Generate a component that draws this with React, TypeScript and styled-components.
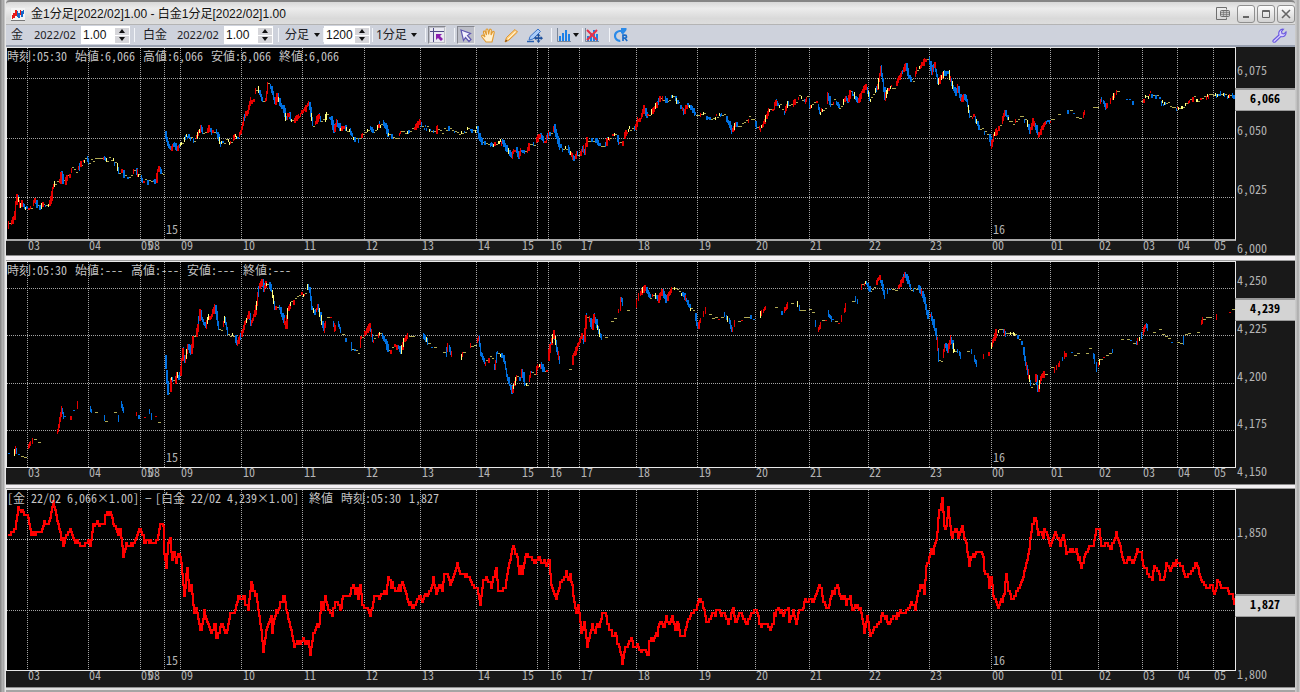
import React from "react";
import styled, { createGlobalStyle } from "styled-components";

const GlobalStyle = createGlobalStyle`
  * { box-sizing: border-box; }
  body { margin: 0; background: #c9c9c9; }
`;

const uiFont = `"Liberation Sans", "Noto Sans CJK JP", sans-serif`;
const labelFont = `"Noto Sans", "Noto Sans CJK JP", sans-serif`;
const monoFont = `"Noto Sans Mono CJK JP", "Liberation Mono", "Noto Sans CJK JP", monospace`;

/* ---------- window chrome ---------- */

const Window = styled.main`
  display: flex;
  flex-direction: column;
  min-height: 100vh;
  padding: 0 5px 0 6px;
  background: linear-gradient(90deg, #8a8a8a 0, #8a8a8a 1px, #b4b4b4 2px, #a2a2a2 4px, #e6e6e6 5px, #e6e6e6 6px, #c9c9c9 7px, #c9c9c9 calc(100% - 4px), #a8a8a8 calc(100% - 2px), #d6d6d6 100%);
`;

const TitleBar = styled.header`
  display: flex;
  align-items: center;
  height: 25px;
  padding: 2px 0 0 5px;
  border-top: 2px solid #858585;
  border-bottom: 1px solid #b4b4b4;
  border-radius: 4px 4px 0 0;
  background: linear-gradient(#d8d8d8, #ececec 30%, #d9d9d9 75%, #dddddd);
`;

const Title = styled.h1`
  flex: 1;
  margin: 0 0 0 6px;
  font: 400 12px/18px ${uiFont};
  color: #111;
  white-space: nowrap;
`;

const WindowButtons = styled.div`
  display: flex;
  align-items: center;
  gap: 2px;
`;

const WindowButton = styled.button<{ $flat?: boolean }>`
  display: grid;
  place-items: center;
  width: 18px;
  height: 18px;
  padding: 0;
  margin-right: ${(p) => (p.$flat ? "3px" : "0")};
  border: ${(p) => (p.$flat ? "0" : "1px solid #8f8f8f")};
  border-radius: 3px;
  background: ${(p) => (p.$flat ? "transparent" : "linear-gradient(#fdfdfd, #d2d2d2)")};
`;

/* ---------- toolbar ---------- */

const Toolbar = styled.div`
  display: flex;
  align-items: center;
  height: 22px;
  padding: 0 7px 0 5px;
  background: #ced2dc;
  border-bottom: 2px solid #98a0b0;
`;

const Commodity = styled.span<{ $wide?: boolean }>`
  width: ${(p) => (p.$wide ? "34px" : "23px")};
  font: 12px/18px ${labelFont};
  color: #1c1c24;
`;

const Contract = styled.span`
  width: 47px;
  font: 11px/18px ${labelFont};
  color: #1c1c24;
`;

const Spinner = styled.label<{ $narrow?: boolean }>`
  display: flex;
  align-items: center;
  width: ${(p) => (p.$narrow ? "46px" : "49px")};
  height: 18px;
  padding-right: 1px;
  background: #fff;
`;

const SpinnerInput = styled.input`
  flex: 1;
  min-width: 0;
  height: 16px;
  padding: 0 0 0 2px;
  border: 0;
  background: transparent;
  font: 12px/16px ${uiFont};
  color: #111;
`;

const Arrows = styled.span`
  display: flex;
  flex-direction: column;
  gap: 1px;
`;

const ArrowButton = styled.button`
  display: grid;
  place-items: center;
  width: 14px;
  height: 7px;
  padding: 0;
  border: 0;
  background: #d6d6da;
`;

const Separator = styled.span<{ $before: number; $after: number }>`
  width: 1px;
  height: 14px;
  margin: 0 ${(p) => p.$after}px 0 ${(p) => p.$before}px;
  background: #f2f4f8;
`;

const Picker = styled.label<{ $width: number }>`
  display: flex;
  align-items: center;
  justify-content: space-between;
  width: ${(p) => p.$width}px;
`;

const Select = styled.select`
  appearance: none;
  flex: 1;
  min-width: 0;
  padding: 0;
  border: 0;
  background: transparent;
  font: 12px/18px ${labelFont};
  color: #1c1c24;
`;

const Tool = styled.button<{ $pressed?: boolean; $gap?: number }>`
  display: grid;
  place-items: center;
  width: 18px;
  height: 18px;
  padding: 0;
  margin-right: ${(p) => p.$gap ?? 0}px;
  border: 1px solid ${(p) => (p.$pressed ? "#85878f" : "transparent")};
  border-right-color: ${(p) => (p.$pressed ? "#e8e8e8" : "transparent")};
  border-bottom-color: ${(p) => (p.$pressed ? "#e8e8e8" : "transparent")};
  background: ${(p) => (p.$pressed ? "#bcbec8" : "transparent")};
`;

const Spacer = styled.span`
  flex: 1;
`;

/* ---------- chart panes ---------- */

const Pane = styled.section<{ $height: number }>`
  display: grid;
  grid-template-columns: minmax(0, 1fr) 59px;
  flex: ${(p) => p.$height} 0 ${(p) => p.$height}px;
  background: #191919;
`;

const PlotColumn = styled.div`
  display: flex;
  flex-direction: column;
`;

const Plot = styled.div<{ $heavy?: boolean }>`
  position: relative;
  flex: 1;
  border: 1px solid #e8e8e8;
  border-bottom: ${(p) => (p.$heavy ? "2px solid #a8a8a8" : "1px solid #e8e8e8")};
  background: #000;
`;

const Canvas = styled.svg`
  position: absolute;
  inset: 0;
  width: 100%;
  height: 100%;
  overflow: visible;
`;

const AxisText = styled.text`
  font: 12px ${monoFont};
  fill: #b4b4b4;
`;

const HourAxis = styled.svg<{ $height: number }>`
  position: relative;
  display: block;
  width: 100%;
  height: ${(p) => p.$height}px;
  overflow: visible;
`;

const Readout = styled.div<{ $columns: string }>`
  position: absolute;
  top: 0;
  left: 0;
  display: grid;
  grid-template-columns: ${(p) => p.$columns};
  font: 12px/16px ${monoFont};
  color: #c4c4c4;
  white-space: pre;
`;

const ScaleColumn = styled.div`
  position: relative;
`;

const Tag = styled.output`
  position: absolute;
  left: -1px;
  right: 0;
  height: 23px;
  border-top: 2px solid #9a9a9a;
  border-bottom: 1px solid #9a9a9a;
  background: #d3d3d3;
  font: 700 12px/16px ${monoFont};
  color: #000;
  text-align: center;
`;

const Divider = styled.div<{ $height: number }>`
  height: ${(p) => p.$height}px;
  border-top: 1px solid #8c8c8c;
  border-bottom: 1px solid #9c9c9c;
  background: #f3f0f3;
`;

const BottomFrame = styled.div`
  height: 5px;
  border-top: 1px solid #909090;
  border-bottom: 2px solid #a4a4a4;
  background: #e0e0e0;
`;

/* ---------- data ---------- */

const LEFT = 7;
const SPAN = 1228;

const hourLines = [
  27, 88, 140, 164, 180, 241, 302, 364, 420, 476, 537, 548, 579, 636, 697, 755,
  809, 868, 929, 991, 1050, 1098, 1142, 1177, 1213,
];

const hourLabels: [number, string][] = [
  [28, "03"], [89, "04"], [141, "05"], [148, "08"], [181, "09"], [243, "10"],
  [304, "11"], [366, "12"], [422, "13"], [478, "14"], [522, "15"], [550, "16"],
  [581, "17"], [638, "18"], [699, "19"], [756, "20"], [810, "21"], [869, "22"],
  [930, "23"], [992, "00"], [1051, "01"], [1099, "02"], [1143, "03"],
  [1178, "04"], [1214, "05"],
];

const goldPoints = `8,227 9,222 11,223 13,220 15,214 16,202 17,196 19,201 20,206 22,203 25,207 27,209 30,208 32,206 35,199 37,205 40,208 43,204 46,207 49,204 51,198 53,188 55,182 58,179 60,182 61,173 63,181 65,183 67,176 70,173 72,169 75,170 79,168 81,163 84,160 87,158 89,162 92,161 95,158 98,160 101,158 104,157 107,161 110,158 114,162 117,165 119,172 122,170 124,175 128,177 131,174 135,169 138,174 141,177 143,182 146,179 150,180 154,181 156,181 158,170 159,168 161,173 164,171 165,133 167,140 169,146 171,149 174,144 177,149 180,145 183,142 186,137 188,137 192,138 195,140 198,134 201,128 203,131 206,132 209,128 212,132 216,130 218,136 220,142 223,142 226,140 229,143 232,140 235,136 238,136 241,132 243,124 245,115 248,111 251,100 254,97 256,89 258,88 261,96 263,101 266,100 268,84 270,85 273,93 275,103 277,95 280,103 284,110 286,119 289,114 291,119 294,121 297,117 300,115 304,110 307,106 309,103 311,115 313,124 316,121 319,115 321,120 324,121 327,115 331,119 334,130 337,122 340,128 344,126 347,130 350,131 353,136 356,138 360,138 363,134 367,130 370,127 373,132 376,130 380,124 383,122 386,127 388,135 392,136 396,137 400,133 405,132 410,132 414,129 417,125 420,121 422,126 425,127 429,129 433,131 435,133 438,127 442,131 447,128 450,129 455,132 459,134 462,131 465,131 469,128 474,130 477,127 479,136 482,142 487,143 490,143 494,145 499,142 502,141 506,148 509,152 512,156 514,150 516,149 519,156 521,150 525,151 527,152 529,145 532,142 535,144 537,139 540,135 544,141 546,140 549,133 552,134 554,127 557,138 560,147 564,149 568,148 571,154 574,159 577,154 580,154 583,148 585,153 587,138 592,138 596,138 599,144 604,147 608,139 612,136 616,133 619,143 623,140 626,131 629,128 633,130 636,126 638,119 641,117 644,108 647,116 651,113 655,107 658,103 660,98 664,97 667,101 671,96 675,98 678,103 682,108 684,112 687,106 691,107 695,113 699,117 703,112 708,117 714,117 720,115 725,116 729,123 732,131 736,124 741,125 746,121 750,117 754,120 757,127 760,126 763,125 766,117 769,111 773,110 776,101 779,105 785,111 788,103 792,106 796,100 799,97 805,98 808,96 810,105 814,104 817,102 820,112 823,110 826,108 828,95 831,105 835,100 839,107 843,103 846,97 848,101 850,92 854,95 858,102 862,92 866,86 870,98 874,93 878,86 881,68 883,80 885,98 888,89 892,87 896,85 900,76 903,71 906,64 908,74 911,80 914,79 917,69 921,66 925,60 929,59 932,72 935,64 938,82 941,78 945,72 949,73 952,84 956,94 958,87 961,100 964,96 967,100 970,117 974,116 978,124 982,129 986,134 989,136 992,146 994,135 997,129 1001,124 1005,112 1008,118 1012,122 1018,118 1023,118 1027,122 1030,132 1033,120 1036,128 1039,136 1042,128 1046,122 1050,122 1055,117 1062,114 1067,110 1074,112 1079,118 1082,118 1087,107 1092,104 1097,108 1102,99 1106,107 1112,99 1117,92 1122,95 1127,101 1133,101 1140,101 1145,96 1151,94 1156,96 1163,102 1170,105 1177,109 1183,106 1190,101 1195,96 1199,101 1205,96 1210,94 1216,94 1224,94 1228,96 1232,94 1234,98`;

const platinumPoints = `8,455 12,457 16,449 18,455 22,456 26,456 28,447 31,443 34,438 36,436 38,443 42,446 44,451 48,451 51,450 53,436 56,434 58,431 60,420 62,409 64,417 68,418 71,415 73,408 76,408 79,402 83,398 86,400 92,412 98,411 102,412 105,419 110,415 115,412 119,419 121,403 124,411 130,410 134,409 138,417 141,419 147,417 148,407 152,418 157,414 158,422 162,422 164,418 165,352 166,372 168,393 170,392 171,378 175,382 177,374 179,378 181,369 183,350 185,362 188,346 191,352 193,338 196,335 198,325 200,312 203,321 206,326 209,315 212,314 215,306 217,318 219,328 222,329 225,318 228,333 231,336 234,333 237,344 240,337 242,333 245,324 249,314 251,324 254,316 257,303 259,287 262,281 264,290 266,283 269,284 272,291 275,308 279,306 282,315 286,326 288,309 291,303 295,298 300,295 306,293 308,285 310,291 312,307 315,313 318,306 321,318 324,330 327,318 331,316 335,329 338,322 342,334 346,339 349,336 352,348 356,352 359,352 361,338 364,335 367,330 370,325 373,340 377,335 381,334 385,340 388,350 393,347 397,345 401,351 404,341 409,334 415,333 421,332 428,342 432,346 437,345 443,352 446,354 448,345 452,355 456,359 460,361 463,353 468,350 471,345 476,343 479,337 481,353 485,362 489,357 493,361 495,369 497,354 502,355 505,362 507,376 510,385 512,391 514,385 517,377 520,380 522,371 525,383 528,383 531,373 535,374 538,366 541,364 544,371 547,370 549,350 552,340 554,332 557,349 560,362 564,365 567,368 571,370 573,357 576,350 579,343 582,335 584,342 586,315 589,317 592,328 594,315 596,322 599,332 602,338 606,338 608,322 612,320 616,315 620,309 621,298 624,306 628,310 632,305 636,305 638,298 642,291 645,287 650,297 654,293 658,300 662,291 666,300 672,289 678,289 683,294 687,301 690,307 694,311 698,327 702,317 706,310 712,317 718,319 724,314 730,322 732,331 735,322 740,319 746,315 750,316 756,321 761,314 766,307 772,308 778,309 784,311 788,305 795,298 800,309 808,309 813,315 818,331 822,322 826,318 828,313 832,320 838,323 841,320 846,306 850,302 855,298 858,302 862,285 866,282 870,290 875,285 880,277 883,289 885,296 889,289 897,290 901,283 905,274 908,281 911,288 915,290 918,287 922,293 925,302 928,317 931,315 934,325 937,338 939,360 942,362 945,345 948,350 951,338 954,350 958,350 961,356 966,350 970,348 974,357 977,365 981,360 985,354 989,350 992,345 996,332 1002,329 1006,335 1012,332 1018,338 1022,343 1025,359 1028,372 1031,385 1034,382 1036,376 1038,390 1041,378 1045,372 1050,366 1054,371 1060,363 1065,354 1070,353 1080,353 1090,350 1094,357 1097,369 1100,360 1106,353 1112,352 1118,341 1124,336 1130,340 1136,344 1142,335 1146,325 1150,331 1158,328 1164,335 1172,343 1178,342 1183,343 1185,334 1192,334 1198,330 1203,319 1208,316 1214,312 1217,318 1222,317 1228,312 1233,309`;

const spreadPoints = `8,534 12,533 15,528 18,507 21,512 25,515 28,517 31,535 34,536 37,532 40,533 44,523 49,522 53,501 57,520 60,533 63,545 66,536 70,530 74,540 78,544 83,546 88,541 90,545 93,527 97,520 99,526 104,522 107,513 110,511 113,523 118,533 120,528 123,556 126,546 133,545 136,537 140,528 144,540 149,542 153,546 157,540 160,523 163,525 164,553 166,567 168,543 170,537 172,558 174,552 176,563 178,553 181,563 184,595 187,568 189,592 191,585 194,614 196,607 200,632 202,627 204,612 207,622 211,632 215,625 216,637 220,627 222,624 226,635 230,613 235,613 238,596 241,600 244,596 245,604 248,607 251,583 254,592 256,594 259,618 261,631 263,652 266,630 268,623 271,616 272,632 275,615 280,605 284,597 288,620 291,630 294,648 297,640 300,644 303,639 305,644 308,640 310,652 313,637 317,625 319,623 321,603 323,612 325,597 328,610 332,614 336,602 340,611 343,595 349,597 353,585 355,595 357,588 358,599 360,583 362,605 366,608 370,615 374,597 379,598 384,592 386,593 388,577 391,584 394,591 399,589 402,583 405,591 408,603 413,607 416,602 420,595 422,601 425,595 428,594 431,588 433,580 436,593 439,586 442,590 444,574 447,573 450,584 454,575 457,565 460,573 465,574 469,578 473,587 477,589 480,604 483,581 486,577 491,587 496,568 498,590 505,589 508,567 511,555 513,545 517,558 519,575 521,562 522,573 526,554 531,559 535,563 538,558 541,563 546,564 549,560 551,584 554,594 556,598 560,583 563,579 566,572 568,582 570,574 574,603 576,613 578,605 581,632 584,624 587,646 592,627 595,633 597,625 599,627 602,613 605,612 608,627 612,635 615,634 619,647 622,661 625,650 631,638 633,646 638,646 641,651 645,649 648,658 649,642 653,640 657,632 660,621 664,628 666,615 669,623 672,616 675,628 678,623 680,635 684,635 687,622 691,613 696,611 699,596 703,607 706,621 709,620 712,613 718,611 724,614 728,623 733,608 735,622 740,613 747,624 750,615 755,611 758,618 761,628 764,623 771,628 774,617 778,608 783,613 788,608 789,621 793,611 796,624 798,612 802,610 804,601 808,604 810,597 813,603 817,589 821,588 823,603 828,609 832,592 837,586 840,596 844,597 846,604 850,596 852,611 855,605 861,613 864,632 867,616 870,635 874,628 879,624 882,614 886,619 889,623 893,617 899,613 905,613 911,603 915,609 918,592 922,585 924,592 926,566 929,560 931,548 933,551 936,540 939,512 942,498 944,527 946,527 948,507 951,536 956,528 958,538 962,527 966,544 969,563 972,555 977,552 982,553 984,568 988,577 989,586 991,577 993,595 998,607 1001,601 1003,600 1006,575 1008,589 1012,600 1016,592 1021,583 1023,577 1026,563 1029,549 1031,529 1034,519 1036,520 1038,533 1041,530 1043,537 1044,530 1047,535 1050,545 1055,532 1057,537 1060,543 1063,536 1066,553 1071,549 1077,553 1081,567 1085,553 1090,545 1093,547 1096,529 1099,529 1101,545 1107,544 1111,547 1116,534 1120,545 1122,558 1126,563 1128,557 1133,563 1137,551 1141,552 1142,563 1147,573 1152,579 1154,566 1160,579 1164,578 1166,563 1170,569 1173,563 1179,564 1182,566 1185,579 1189,573 1193,569 1196,563 1199,573 1204,586 1208,588 1212,586 1214,595 1217,582 1223,589 1226,587 1229,593 1232,594 1234,604`;

type Point = [number, number];

const parse = (s: string): Point[] =>
  s.split(" ").map((p) => p.split(",").map(Number) as Point);

/* Price at every minute column, interpolated between the turning points. */
function columns(points: Point[]): Point[] {
  const out: Point[] = [];
  for (let i = 0; i < points.length - 1; i++) {
    const [x0, y0] = points[i];
    const [x1, y1] = points[i + 1];
    for (let x = x0; x < x1; x++) out.push([x, y0 + ((y1 - y0) * (x - x0)) / (x1 - x0)]);
  }
  out.push(points[points.length - 1]);
  return out;
}

function random(seed: number) {
  let s = seed;
  return () => {
    s = (s + 0x6d2b79f5) | 0;
    let t = Math.imul(s ^ (s >>> 15), 1 | s);
    t = (t + Math.imul(t ^ (t >>> 7), 61 | t)) ^ t;
    return ((t ^ (t >>> 14)) >>> 0) / 4294967296;
  };
}

/* Quiet minutes become one-pixel dashes, moving ones become coloured bars. */
function candles(points: Point[], tick: number, thin: [number, number][], seed: number) {
  const rnd = random(seed);
  const paths = { up: "", down: "", flat: "", bright: "" };
  const cols = columns(points);
  const put = (kind: keyof typeof paths, x: number, y: number, w: number, h: number) => {
    paths[kind] += `M${x} ${y}h${w}v${h}h-${w}z`;
  };
  let i = 0;
  while (i < cols.length - 1) {
    const [x, y] = cols[i];
    const slope = cols[i + 1][1] - y;
    const sparse = thin.some(([a, b]) => x >= a && x < b);
    const jitter = Math.round((rnd() - 0.5) * 2) * tick;
    const level = Math.round(Math.round(y / tick) * tick + jitter * 0.6);
    const trend = slope < 0 ? "up" : "down";
    const kind = rnd();
    if (Math.abs(slope) > 24) {
      i += 1;
    } else if (Math.abs(slope) < 1.3) {
      if (sparse) {
        if (rnd() < 0.6) put(kind < 0.75 ? "flat" : trend, x, level, kind < 0.75 ? 3 : 2, kind < 0.9 ? 1 : 4);
        i += 3;
      } else if (kind < 0.5) {
        put("flat", x, level, 2, 1);
        i += 2;
      } else if (kind < 0.65) {
        put("bright", x, level - 1, 1, 3);
        i += 1;
      } else {
        put(trend, x, level - 1, kind > 0.85 ? 2 : 1, 2 + Math.floor(rnd() * 4));
        i += kind > 0.85 ? 2 : 1;
      }
    } else {
      if (!sparse || rnd() < 0.65) {
        const tall = Math.round(Math.min(14, Math.abs(slope) + 2 + rnd() * 4));
        const top = Math.round(y + slope / 2 - tall / 2);
        const hue = kind > 0.9 ? "bright" : kind > 0.82 ? (trend === "up" ? "down" : "up") : trend;
        put(hue, x, top, kind < 0.4 && !sparse ? 2 : 1, tall);
      }
      i += 1;
    }
  }
  return paths;
}

function steps(points: Point[], tick: number) {
  const rnd = random(11);
  let d = "";
  columns(points).forEach(([x, y], i) => {
    const jitter = rnd() < 0.35 ? (rnd() - 0.5) * 6 : 0;
    const level = Math.round(Math.round((y + jitter) / tick) * tick);
    d += i === 0 ? `M${x} ${level}` : `H${x}V${level}`;
  });
  return d;
}

const gold = candles(parse(goldPoints), 2.4, [[1054, 1140]], 5);
const platinum = candles(
  parse(platinumPoints),
  1.9,
  [[8, 164], [326, 350], [405, 480], [555, 572], [600, 640], [700, 862], [885, 900], [958, 990], [1044, 1234]],
  9,
);
const spread = steps(parse(spreadPoints), 2.8);

interface PaneSpec {
  name: string;
  top: number;
  height: number;
  plotHeight: number;
  axisHeight: number;
  heavy?: boolean;
  grid: number[];
  scale: [number, string][];
  tag: [number, string];
  readout: string[];
  columns: string;
}

const panes: PaneSpec[] = [
  {
    name: "金", top: 47, height: 208, plotHeight: 191, axisHeight: 14, heavy: true,
    grid: [78, 138, 197],
    scale: [[75, "6,075"], [135, "6,050"], [194, "6,025"], [253, "6,000"]],
    tag: [88, "6,066"],
    readout: ["時刻:05:30", "始値:6,066", "高値:6,066", "安値:6,066", "終値:6,066"],
    columns: "repeat(5, 68px)",
  },
  {
    name: "白金", top: 261, height: 223, plotHeight: 205, axisHeight: 16,
    grid: [288, 335, 383, 430],
    scale: [[285, "4,250"], [333, "4,225"], [381, "4,200"], [428, "4,175"], [476, "4,150"]],
    tag: [298, "4,239"],
    readout: ["時刻:05:30", "始値:---", "高値:---", "安値:---", "終値:---"],
    columns: "68px repeat(4, 56px)",
  },
  {
    name: "価格差", top: 489, height: 198, plotHeight: 180, axisHeight: 16,
    grid: [539, 610],
    scale: [[537, "1,850"], [679, "1,800"]],
    tag: [594, "1,827"],
    readout: ["[金 22/02 6,066×1.00]", "−", "[白金 22/02 4,239×1.00]", "終値", "時刻:05:30", "1,827"],
    columns: "138px 10px 154px 32px 68px 40px",
  },
];

const percent = (value: number, size: number) => `${(value / size) * 100}%`;

function Candles({ data }: { data: typeof gold }) {
  return (
    <>
      <path d={data.flat} fill="#b0aa54" />
      <path d={data.down} fill="#0070e0" />
      <path d={data.up} fill="#e60000" />
      <path d={data.bright} fill="#ffff80" />
    </>
  );
}

function ChartPane({ spec, children }: { spec: PaneSpec; children: React.ReactNode }) {
  const top = spec.top + 1;
  const verticals = hourLines.map((x) => `M${x + 0.5} ${top}v${spec.plotHeight}`).join("");
  const horizontals = spec.grid.map((y) => `M${LEFT} ${y + 0.5}h${SPAN}`).join("");
  return (
    <Pane $height={spec.height} aria-label={spec.name}>
      <PlotColumn>
        <Plot $heavy={spec.heavy}>
          <Canvas>
            <svg
              width="100%"
              height="100%"
              viewBox={`${LEFT} ${top} ${SPAN} ${spec.plotHeight}`}
              preserveAspectRatio="none"
              shapeRendering="crispEdges"
            >
              <path d={verticals + horizontals} stroke="#a4a4a4" strokeDasharray="1 1" fill="none" />
              {children}
            </svg>
            <AxisText x={percent(166 - LEFT, SPAN)} y="100%" dy="-5">15</AxisText>
            <AxisText x={percent(993 - LEFT, SPAN)} y="100%" dy="-5">16</AxisText>
          </Canvas>
          <Readout $columns={spec.columns}>
            {spec.readout.map((t) => <span key={t}>{t}</span>)}
          </Readout>
        </Plot>
        <HourAxis $height={spec.axisHeight}>
          {hourLabels.map(([x, t]) => (
            <AxisText key={x} x={percent(x - LEFT + 1, SPAN + 2)} y="9">{t}</AxisText>
          ))}
        </HourAxis>
      </PlotColumn>
      <ScaleColumn>
        <Canvas>
          {spec.scale.map(([y, t]) => (
            <AxisText key={t} x="1" y={percent(y - spec.top, spec.height)}>{t}</AxisText>
          ))}
        </Canvas>
        <Tag style={{ top: percent(spec.tag[0] - spec.top, spec.height) }}>{spec.tag[1]}</Tag>
      </ScaleColumn>
    </Pane>
  );
}

/* ---------- icons ---------- */

const AppIcon = () => (
  <svg width="14" height="13" viewBox="0 0 14 13" shapeRendering="crispEdges" aria-hidden="true">
    <path d="M0 0h14v13H0z" fill="#f4f4f4" />
    <path d="M0 12h14v1H0z" fill="#777" />
    <path d="M1 7h1v4H1zM2 5h2v5H2zM4 2h2v6H4zM9 2h1v5H9z" fill="#e81818" />
    <path d="M6 3h1v6H6zM7 5h2v5H7zM10 3h2v6h-2zM12 2h1v4h-1z" fill="#1868c8" />
  </svg>
);

const Triangle = ({ up }: { up?: boolean }) => (
  <svg width="6" height="4" viewBox="0 0 6 4" aria-hidden="true">
    <path d={up ? "M0 4h6L3 0z" : "M0 0h6L3 4z"} fill="#111" />
  </svg>
);

const PopOutIcon = () => (
  <svg width="15" height="14" viewBox="0 0 15 14" fill="none" stroke="#6e6e6e" aria-hidden="true">
    <path d="M10.500 2.500V.5H.5v12h10v-2" />
    <rect x="4.500" y="3.500" width="9" height="6" rx="1" fill="#c4c4c4" />
    <path d="M5 5.500h8M5 7.500h8M7.500 4v5M10.500 4v5" strokeOpacity=".6" />
  </svg>
);
const MinIcon = () => (
  <svg width="12" height="12" viewBox="0 0 12 12" aria-hidden="true"><path d="M3 8h6v2H3z" fill="#666" /></svg>
);
const MaxIcon = () => (
  <svg width="12" height="12" viewBox="0 0 12 12" aria-hidden="true">
    <path d="M2.500 2.500h7v7h-7zM2 3.500h8" fill="none" stroke="#666" />
  </svg>
);
const CloseIcon = () => (
  <svg width="12" height="12" viewBox="0 0 12 12" aria-hidden="true">
    <path d="M2 2l8 8M10 2l-8 8" stroke="#666" strokeWidth="1.600" />
  </svg>
);

const CrossCursorIcon = () => (
  <svg width="14" height="14" viewBox="0 0 14 14" aria-hidden="true">
    <path d="M0 0h14v14H0z" fill="#e9e9f1" />
    <path d="M3.500 0v14M0 3.500h14" stroke="#504c88" />
    <path d="M6 6h6l-2 2 3 3-2 2-3-3-2 2z" fill="#8a1fae" />
  </svg>
);
const PointerIcon = () => (
  <svg width="14" height="15" viewBox="0 0 14 15" aria-hidden="true">
    <path d="M2 2l9.500 3.500-3 2 3.500 4-2 2-3.500-4-2 3z" fill="#f4f2ff" stroke="#6058b0" strokeWidth="1.200" />
  </svg>
);
const HandIcon = () => (
  <svg width="15" height="15" viewBox="0 0 15 15" aria-hidden="true">
    <path
      d="M5 14L1 9c-1-1.500.5-2.500 1.500-1.500L4 9 2.500 4.500c-.3-1.500 1.200-2 1.700-.7L5.500 7 5 2.200C5 .7 6.700.7 7 2l.6 4.500L8.500 2c.3-1.300 2-1 1.800.4L10 7l1.500-3c.6-1.200 2-.6 1.700.6L12 10l-1 4z"
      fill="#fff0d0" stroke="#e09a30" strokeWidth="1.100"
    />
  </svg>
);
const PencilIcon = () => (
  <svg width="15" height="15" viewBox="0 0 15 15" aria-hidden="true">
    <path d="M1 14l1.500-4.500 8.500-8 2.500 2.500L5 12z" fill="#ffd488" stroke="#e0922a" />
    <path d="M1 14l1-2.500 1.500 1.500z" fill="#7a4a18" />
    <path d="M4 11l7.500-7.500" stroke="#fff3d8" />
  </svg>
);
const PenMoveIcon = () => (
  <svg width="16" height="15" viewBox="0 0 16 15" aria-hidden="true">
    <path d="M2 12l1-3.500L11 1l2.500 2.500L6 11z" fill="#a9cbf8" stroke="#3a74c8" />
    <path d="M0 13.500h7" stroke="#2860b0" strokeWidth="1.500" />
    <path d="M11.500 5.500l2 2.300h-1.300v1.500h1.500V8L16 10.200l-2.300 2.100v-1.200h-1.500v1.500h1.300l-2 2.300-2-2.300h1.300v-1.500H9.300v1.200L7 10.200 9.300 8v1.300h1.500V7.800H9.500z" fill="#1c4f9c" />
  </svg>
);
const BarsIcon = ({ crossed }: { crossed?: boolean }) => (
  <svg width="14" height="14" viewBox="0 0 14 14" aria-hidden="true">
    <path d="M.5 0v13.500H14" stroke="#7b8798" fill="none" />
    <path d="M2 8h2v5H2zM5 5h2v8H5zM8 2h2v11H8zM11 6h2v7h-2z" fill="#1a80e8" />
    {crossed && <path d="M2 2l10 10M12 2L2 12" stroke="#e83048" strokeWidth="2" />}
  </svg>
);
const ReloadIcon = () => (
  <svg width="15" height="15" viewBox="0 0 15 15" aria-hidden="true">
    <path d="M8 3H5.500a4.800 4.800 0 1 0 .8 9.800" fill="none" stroke="#2a8ae8" strokeWidth="2.200" />
    <path d="M7 0h5.500v2L9 6.500 7 5z" fill="#2a8ae8" />
    <path d="M9 13V7.200h2a1.500 1.500 0 0 1 0 3H9m2 0l2.200 2.800" fill="none" stroke="#1a6cc8" strokeWidth="1.700" />
  </svg>
);
const WrenchIcon = () => (
  <svg width="15" height="15" viewBox="0 0 15 15" aria-hidden="true">
    <path
      d="M1 12.500L7 7C6 4 8 .8 11.500 1.200L9.500 3.500l.5 2 2 .4 2-2C14.500 7 12 9.500 8.800 8.500L3.200 14c-1.200.8-3-.4-2.200-1.500z"
      fill="#d8d0ff" stroke="#6a58e0" strokeWidth="1.100"
    />
  </svg>
);

function NumberBox({ label, value, narrow }: { label: string; value: string; narrow?: boolean }) {
  return (
    <Spinner $narrow={narrow}>
      <SpinnerInput aria-label={label} defaultValue={value} />
      <Arrows>
        <ArrowButton aria-label={`${label} +`}><Triangle up /></ArrowButton>
        <ArrowButton aria-label={`${label} −`}><Triangle /></ArrowButton>
      </Arrows>
    </Spinner>
  );
}

export default function App() {
  return (
    <Window>
      <GlobalStyle />
      <TitleBar>
        <AppIcon />
        <Title>金1分足[2022/02]1.00 - 白金1分足[2022/02]1.00</Title>
        <WindowButtons>
          <WindowButton $flat aria-label="別ウィンドウ"><PopOutIcon /></WindowButton>
          <WindowButton aria-label="最小化"><MinIcon /></WindowButton>
          <WindowButton aria-label="最大化"><MaxIcon /></WindowButton>
          <WindowButton aria-label="閉じる"><CloseIcon /></WindowButton>
        </WindowButtons>
      </TitleBar>
      <Toolbar>
        <Commodity>金</Commodity>
        <Contract>2022/02</Contract>
        <NumberBox label="金の倍率" value="1.00" />
        <Separator $before={4} $after={8} />
        <Commodity $wide>白金</Commodity>
        <Contract>2022/02</Contract>
        <NumberBox label="白金の倍率" value="1.00" />
        <Separator $before={5} $after={6} />
        <Picker $width={35}>
          <Select aria-label="足種"><option>分足</option></Select>
          <Triangle />
        </Picker>
        <Separator $before={3} $after={0} />
        <NumberBox label="本数" value="1200" narrow />
        <Separator $before={2} $after={3} />
        <Picker $width={41}>
          <Select aria-label="足間隔"><option>1分足</option></Select>
          <Triangle />
        </Picker>
        <Separator $before={8} $after={2} />
        <Tool $pressed aria-label="十字カーソル"><CrossCursorIcon /></Tool>
        <Separator $before={8} $after={2} />
        <Tool $pressed $gap={4} aria-label="選択"><PointerIcon /></Tool>
        <Tool $gap={5} aria-label="移動"><HandIcon /></Tool>
        <Tool $gap={6} aria-label="描画"><PencilIcon /></Tool>
        <Tool aria-label="描画の移動"><PenMoveIcon /></Tool>
        <Separator $before={7} $after={3} />
        <Tool aria-label="指標"><BarsIcon /></Tool>
        <Triangle />
        <Separator $before={3} $after={0} />
        <Tool aria-label="指標の削除"><BarsIcon crossed /></Tool>
        <Separator $before={8} $after={2} />
        <Tool aria-label="更新"><ReloadIcon /></Tool>
        <Spacer />
        <Tool aria-label="設定"><WrenchIcon /></Tool>
      </Toolbar>
      <ChartPane spec={panes[0]}><Candles data={gold} /></ChartPane>
      <Divider $height={6} />
      <ChartPane spec={panes[1]}><Candles data={platinum} /></ChartPane>
      <Divider $height={5} />
      <ChartPane spec={panes[2]}>
        <path d={spread} fill="none" stroke="#ff0000" strokeWidth="2" />
      </ChartPane>
      <BottomFrame />
    </Window>
  );
}
